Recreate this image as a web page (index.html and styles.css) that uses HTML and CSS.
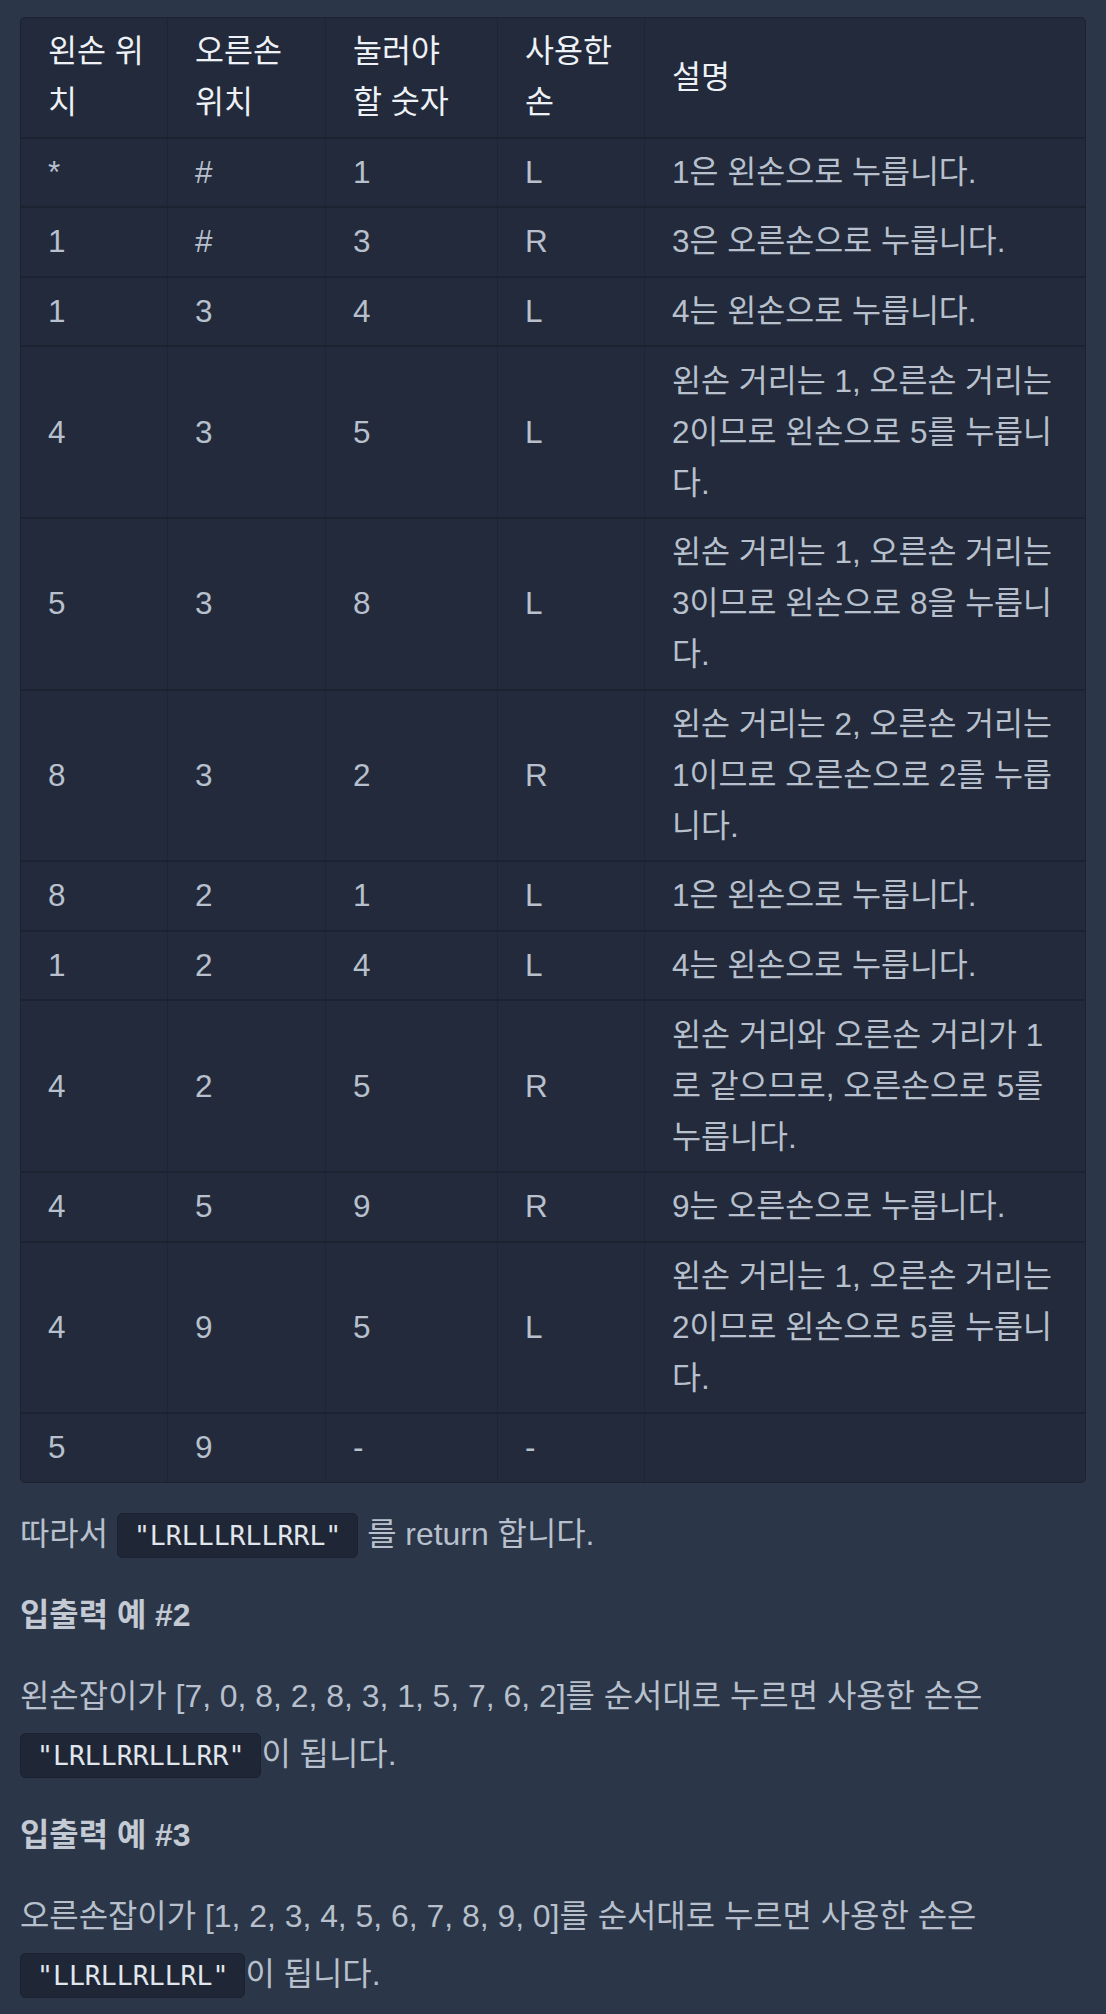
FILE: index.html
```html
<!DOCTYPE html>
<html lang="ko">
<head>
  <meta charset="UTF-8">
  <title>키패드 누르기 - 입출력 예 설명</title>
  <link rel="stylesheet" href="styles.css">
</head>
<body>
<div class="desc">
  <table class="hand-table">
    <colgroup>
      <col class="c-left"><col class="c-right"><col class="c-num"><col class="c-hand"><col>
    </colgroup>
    <thead>
      <tr><th>왼손 위<br>치</th><th>오른손<br>위치</th><th>눌러야<br>할 숫자</th><th>사용한<br>손</th><th>설명</th></tr>
    </thead>
    <tbody>
      <tr><td>*</td><td>#</td><td>1</td><td>L</td><td>1은 왼손으로 누릅니다.</td></tr>
      <tr><td>1</td><td>#</td><td>3</td><td>R</td><td>3은 오른손으로 누릅니다.</td></tr>
      <tr><td>1</td><td>3</td><td>4</td><td>L</td><td>4는 왼손으로 누릅니다.</td></tr>
      <tr><td>4</td><td>3</td><td>5</td><td>L</td><td>왼손 거리는 1, 오른손 거리는 2이므로 왼손으로 5를 누릅니다.</td></tr>
      <tr><td>5</td><td>3</td><td>8</td><td>L</td><td>왼손 거리는 1, 오른손 거리는 3이므로 왼손으로 8을 누릅니다.</td></tr>
      <tr><td>8</td><td>3</td><td>2</td><td>R</td><td>왼손 거리는 2, 오른손 거리는 1이므로 오른손으로 2를 누릅니다.</td></tr>
      <tr><td>8</td><td>2</td><td>1</td><td>L</td><td>1은 왼손으로 누릅니다.</td></tr>
      <tr><td>1</td><td>2</td><td>4</td><td>L</td><td>4는 왼손으로 누릅니다.</td></tr>
      <tr><td>4</td><td>2</td><td>5</td><td>R</td><td>왼손 거리와 오른손 거리가 1로 같으므로, 오른손으로 5를 누릅니다.</td></tr>
      <tr><td>4</td><td>5</td><td>9</td><td>R</td><td>9는 오른손으로 누릅니다.</td></tr>
      <tr><td>4</td><td>9</td><td>5</td><td>L</td><td>왼손 거리는 1, 오른손 거리는 2이므로 왼손으로 5를 누릅니다.</td></tr>
      <tr><td>5</td><td>9</td><td>-</td><td>-</td><td></td></tr>
    </tbody>
  </table>

  <p>따라서 <code>"LRLLLRLLRRL"</code> 를 return 합니다.</p>

  <p class="example-title">입출력 예 #2</p>
  <p>왼손잡이가 [7, 0, 8, 2, 8, 3, 1, 5, 7, 6, 2]를 순서대로 누르면 사용한 손은 <code>"LRLLRRLLLRR"</code>이 됩니다.</p>

  <p class="example-title">입출력 예 #3</p>
  <p>오른손잡이가 [1, 2, 3, 4, 5, 6, 7, 8, 9, 0]를 순서대로 누르면 사용한 손은 <code>"LLRLLRLLRL"</code>이 됩니다.</p>
</div>
</body>
</html>
```

FILE: styles.css
```css
body{margin:0;background:#2b3648;color:#b7c0cc;font-family:"Liberation Sans","Noto Sans CJK KR",sans-serif;font-size:31.5px;}
.desc{padding:17px 20px 20px;}

.hand-table{width:100%;table-layout:fixed;border-collapse:separate;border-spacing:0;background:#222a3b;border:1px solid #1b2230;border-radius:5px;margin:0 0 22px;}
.hand-table .c-left{width:147px;}
.hand-table .c-right{width:158px;}
.hand-table .c-num{width:172px;}
.hand-table .c-hand{width:147px;}
.hand-table th,.hand-table td{padding:8.3px 27px;line-height:51px;text-align:left;vertical-align:middle;border-right:1px solid #1d2535;border-bottom:2px solid #1b2230;}
.hand-table th:last-child,.hand-table td:last-child{border-right:0;}
.hand-table tbody tr:last-child td{border-bottom:0;}
.hand-table th{font-weight:400;color:#eef1f5;white-space:nowrap;}

p{margin:0 0 23px;font-size:31.9px;line-height:58px;}
.example-title{font-weight:700;color:#c3cad4;}
code{font-family:"DejaVu Sans Mono",monospace;font-size:26.5px;line-height:1;color:#e1e6ec;background:#1f2737;border:1px solid #1a2130;border-radius:6px;padding:6px 16px;}
```
